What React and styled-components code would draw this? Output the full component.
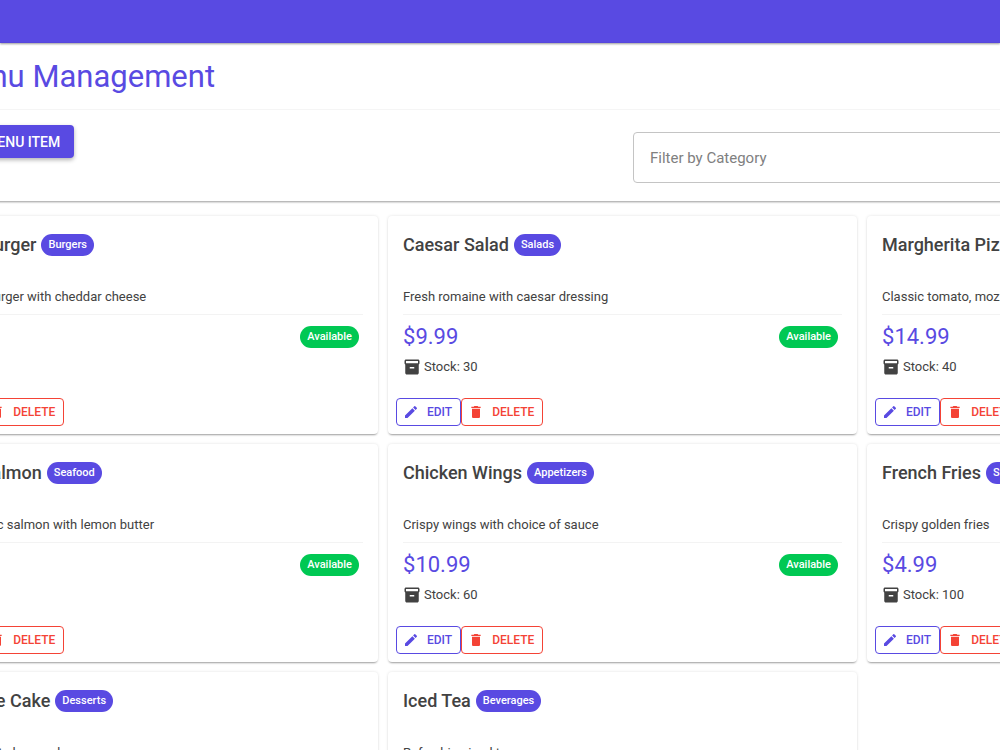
import React, { useState } from "react";
import styled, { createGlobalStyle } from "styled-components";
import { MdAdd, MdDelete, MdEdit, MdInventory2, MdRestaurantMenu } from "react-icons/md";

const GlobalStyle = createGlobalStyle`
    * {
        box-sizing: border-box;
    }

    body {
        margin: 0;
        overflow: hidden;
        background: #fff;
        color: #424242;
        font-family: Roboto, sans-serif;
    }
`

const AppBar = styled.header`
    height: 43px;
    background: #594ae2;
    box-shadow: 0 1px 2px rgba(0, 0, 0, 0.4);
`

/* the board is wider than the window and sits scrolled to the right */
const Board = styled.main`
    margin: 0 -336px 0 -91px;
`

const Paper = styled.section`
    margin-bottom: 15px;
    box-shadow: 0 1px 2px rgba(0, 0, 0, 0.4);
`

const PageTitle = styled.h1`
    display: flex;
    align-items: center;
    gap: 5px;
    height: 67px;
    margin: 0;
    padding: 2px 15px 0;
    border-bottom: 1px solid #f5f5f5;
    color: #594ae2;
    font-size: 31px;
    font-weight: 400;
    line-height: 38px;
`

const Toolbar = styled.div`
    display: grid;
    grid-template-columns: 1fr 1fr;
    gap: 21px;
    align-items: start;
    padding: 15px 15px 18px;
`

const AddButton = styled.button`
    display: flex;
    align-items: center;
    justify-self: start;
    gap: 4px;
    height: 33px;
    padding: 0 14px 0 8px;
    border: 0;
    border-radius: 4px;
    background: #594ae2;
    color: #fff;
    font: 500 14px/20px Roboto, sans-serif;
    text-transform: uppercase;
    box-shadow: 0 2px 4px rgba(0, 0, 0, 0.3);
`

const Filter = styled.select`
    width: 100%;
    height: 51px;
    margin-top: 7px;
    padding: 0 16px;
    appearance: none;
    border: 1px solid #c4c4c4;
    border-radius: 4px;
    background: #fff;
    color: #808080;
    font: 400 15px/20px Roboto, sans-serif;
`

const Grid = styled.div`
    display: grid;
    grid-template-columns: repeat(3, 1fr);
    gap: 10px;
`

const Card = styled.article`
    padding-bottom: 8px;
    border-radius: 4px;
    background: #fff;
    box-shadow: 0 2px 2px -1px rgba(0, 0, 0, 0.35), 0 0 3px rgba(0, 0, 0, 0.12);
`

const CardBody = styled.div`
    padding: 18px 15px 21px;
`

const CardHead = styled.div`
    display: flex;
    align-items: center;
    gap: 5px;
    margin-bottom: 31px;
`

const Name = styled.h2`
    margin: 0;
    font-size: 18px;
    font-weight: 500;
    line-height: 22px;
`

const Chip = styled.span`
    padding: 0 7px;
    border-radius: 11px;
    background: ${({ $color }) => $color};
    color: #fff;
    font-size: 11px;
    font-weight: 500;
    line-height: 22px;
`

const Description = styled.p`
    margin: 0;
    padding-bottom: 7px;
    border-bottom: 1px solid #f3f3f3;
    font-size: 13px;
    line-height: 20px;
`

const PriceRow = styled.div`
    display: flex;
    align-items: center;
    justify-content: space-between;
    padding: 8px 4px 6px 0;
`

const Price = styled.span`
    color: #594ae2;
    font-size: 22px;
    line-height: 28px;
`

const Stock = styled.div`
    display: flex;
    align-items: center;
    gap: 3px;
    font-size: 13px;
    line-height: 20px;
`

const Actions = styled.div`
    display: flex;
    padding: 0 8px;
`

const ActionButton = styled.button`
    display: flex;
    align-items: center;
    gap: 8px;
    height: 28px;
    padding: 0 8px 0 6px;
    border: 1px solid ${({ $color }) => $color};
    border-radius: 4px;
    background: transparent;
    color: ${({ $color }) => $color};
    font: 500 12px/20px Roboto, sans-serif;
    text-transform: uppercase;
`

const PRIMARY = "#594ae2"
const SUCCESS = "#00c853"
const ERROR = "#f44336"

const items = [
    { name: "Cheeseburger", category: "Burgers", description: "Juicy beef burger with cheddar cheese", price: 12.99, stock: 50 },
    { name: "Caesar Salad", category: "Salads", description: "Fresh romaine with caesar dressing", price: 9.99, stock: 30 },
    { name: "Margherita Pizza", category: "Pizza", description: "Classic tomato, mozzarella and basil", price: 14.99, stock: 40 },
    { name: "Grilled Salmon", category: "Seafood", description: "Fresh Atlantic salmon with lemon butter", price: 18.99, stock: 25 },
    { name: "Chicken Wings", category: "Appetizers", description: "Crispy wings with choice of sauce", price: 10.99, stock: 60 },
    { name: "French Fries", category: "Sides", description: "Crispy golden fries", price: 4.99, stock: 100 },
    { name: "Chocolate Cake", category: "Desserts", description: "Rich chocolate layer cake", price: 6.99, stock: 20 },
    { name: "Iced Tea", category: "Beverages", description: "Refreshing iced tea", price: 2.99, stock: 80 },
]

const MenuCard = ({ item }) => (
    <Card>
        <CardBody>
            <CardHead>
                <Name>{item.name}</Name>
                <Chip $color={PRIMARY}>{item.category}</Chip>
            </CardHead>
            <Description>{item.description}</Description>
            <PriceRow>
                <Price>${item.price}</Price>
                <Chip $color={SUCCESS}>Available</Chip>
            </PriceRow>
            <Stock>
                <MdInventory2 size={18} />
                Stock: {item.stock}
            </Stock>
        </CardBody>
        <Actions>
            <ActionButton $color={PRIMARY}>
                <MdEdit size={16} />
                Edit
            </ActionButton>
            <ActionButton $color={ERROR}>
                <MdDelete size={16} />
                Delete
            </ActionButton>
        </Actions>
    </Card>
)

const App = () => {
    const [category, setCategory] = useState("")
    const categories = items.map((item) => item.category)
    const visible = items.filter((item) => !category || item.category === category)

    return (
        <>
            <GlobalStyle />
            <AppBar />
            <Board>
                <Paper>
                    <PageTitle>
                        <MdRestaurantMenu size={18} />
                        Menu Management
                    </PageTitle>
                    <Toolbar>
                        <AddButton>
                            <MdAdd size={18} />
                            Add Menu Item
                        </AddButton>
                        <Filter
                            aria-label="Filter by Category"
                            value={category}
                            onChange={(e) => setCategory(e.target.value)}
                        >
                            <option value="">Filter by Category</option>
                            {categories.map((c) => (
                                <option key={c} value={c}>{c}</option>
                            ))}
                        </Filter>
                    </Toolbar>
                </Paper>
                <Grid>
                    {visible.map((item) => (
                        <MenuCard key={item.name} item={item} />
                    ))}
                </Grid>
            </Board>
        </>
    )
}

export default App
